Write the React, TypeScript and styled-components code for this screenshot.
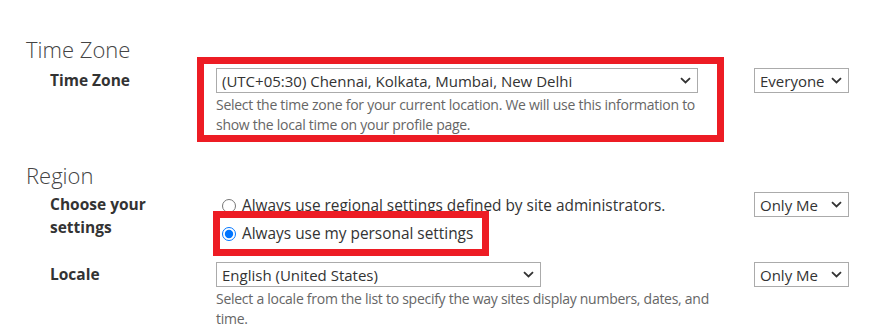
import React from "react";
import styled, { createGlobalStyle } from "styled-components";

const Global = createGlobalStyle`
  html, body { margin: 0; padding: 0; background: #fff; }
  body { font-family: "Open Sans", "Noto Sans", sans-serif; color: #333; }
`;

const Page = styled.div`
  padding: 34px 0 0 26px;
  width: 856px;
`;

const Section = styled.section`
  display: flex;
  flex-direction: column;
`;

const Heading = styled.h2<{ $top?: number }>`
  margin: ${(p) => p.$top ?? 0}px 0 0 0;
  font-size: 22px;
  line-height: 30px;
  font-weight: 300;
  color: #444;
`;

const Row = styled.div<{ $top?: number }>`
  display: grid;
  grid-template-columns: 166px 538px 95px;
  margin-top: ${(p) => p.$top ?? 0}px;
  padding-left: 24px;
`;

const Label = styled.div`
  font-size: 15.5px;
  font-weight: 700;
  line-height: 23px;
  color: #333;
  padding-top: 1px;
`;

const Control = styled.div`
  position: relative;
  display: flex;
  flex-direction: column;
  align-items: flex-start;
`;

const Highlight = styled.div<{ $l: number; $t: number; $w: number; $h: number }>`
  position: absolute;
  left: ${(p) => p.$l}px;
  top: ${(p) => p.$t}px;
  width: ${(p) => p.$w}px;
  height: ${(p) => p.$h}px;
  border: 7px solid #ed1c24;
  box-sizing: border-box;
  pointer-events: none;
`;

const SelectWrap = styled.div<{ $w: number }>`
  position: relative;
  width: ${(p) => p.$w}px;
  height: 25px;
`;

const NativeSelect = styled.select`
  appearance: none;
  -webkit-appearance: none;
  width: 100%;
  height: 100%;
  box-sizing: border-box;
  border: 1px solid #ababab;
  border-radius: 0;
  background: #fff;
  padding: 0 24px 0 5px;
  font-family: "Open Sans", "Noto Sans", sans-serif;
  font-size: 15px;
  color: #333;
  outline: none;
`;

const Chevron = styled.svg`
  position: absolute;
  right: 7px;
  top: 9px;
  width: 11px;
  height: 7px;
  pointer-events: none;
`;

const Help = styled.p`
  margin: 2px 0 0 0;
  font-size: 14px;
  letter-spacing: -0.27px;
  line-height: 20px;
  color: #666;
  max-width: 500px;
`;

const RadioList = styled.div`
  display: flex;
  flex-direction: column;
  gap: 7px;
  padding-top: 3px;
`;

const RadioRow = styled.label`
  position: relative;
  display: flex;
  align-items: center;
  gap: 6px;
  font-size: 15.4px;
  line-height: 21px;
  color: #333;
  height: 21px;
`;

const Radio = styled.input`
  width: 14px;
  height: 14px;
  margin: 0 0 0 6px;
`;

function Select({ width, value }: { width: number; value: string }) {
  return (
    <SelectWrap $w={width}>
      <NativeSelect defaultValue={value}>
        <option>{value}</option>
      </NativeSelect>
      <Chevron viewBox="0 0 11 7">
        <path d="M1 1.2 L5.5 5.5 L10 1.2" fill="none" stroke="#333" strokeWidth="1.8" />
      </Chevron>
    </SelectWrap>
  );
}

export default function App() {
  return (
    <>
      <Global />
      <Page>
        <Section>
          <Heading>Time Zone</Heading>
          <Row $top={4}>
            <Label>Time Zone</Label>
            <Control>
              <Highlight $l={-19} $t={-11} $w={527} $h={85} />
              <Select width={482} value="(UTC+05:30) Chennai, Kolkata, Mumbai, New Delhi" />
              <Help>
                Select the time zone for your current location. We will use this information to
                show the local time on your profile page.
              </Help>
            </Control>
            <Select width={95} value="Everyone" />
          </Row>
        </Section>
        <Section>
          <Heading $top={25}>Region</Heading>
          <Row $top={2}>
            <Label>
              Choose your
              <br />
              settings
            </Label>
            <Control>
              <RadioList>
                <RadioRow>
                  <Radio type="radio" name="region" />
                  Always use regional settings defined by site administrators.
                </RadioRow>
                <RadioRow>
                  <Highlight $l={-3} $t={-12} $w={276} $h={45} />
                  <Radio type="radio" name="region" defaultChecked />
                  Always use my personal settings
                </RadioRow>
              </RadioList>
            </Control>
            <Select width={95} value="Only Me" />
          </Row>
          <Row $top={18}>
            <Label>Locale</Label>
            <Control>
              <Select width={325} value="English (United States)" />
              <Help>
                Select a locale from the list to specify the way sites display numbers, dates, and
                time.
              </Help>
            </Control>
            <Select width={95} value="Only Me" />
          </Row>
        </Section>
      </Page>
    </>
  );
}
